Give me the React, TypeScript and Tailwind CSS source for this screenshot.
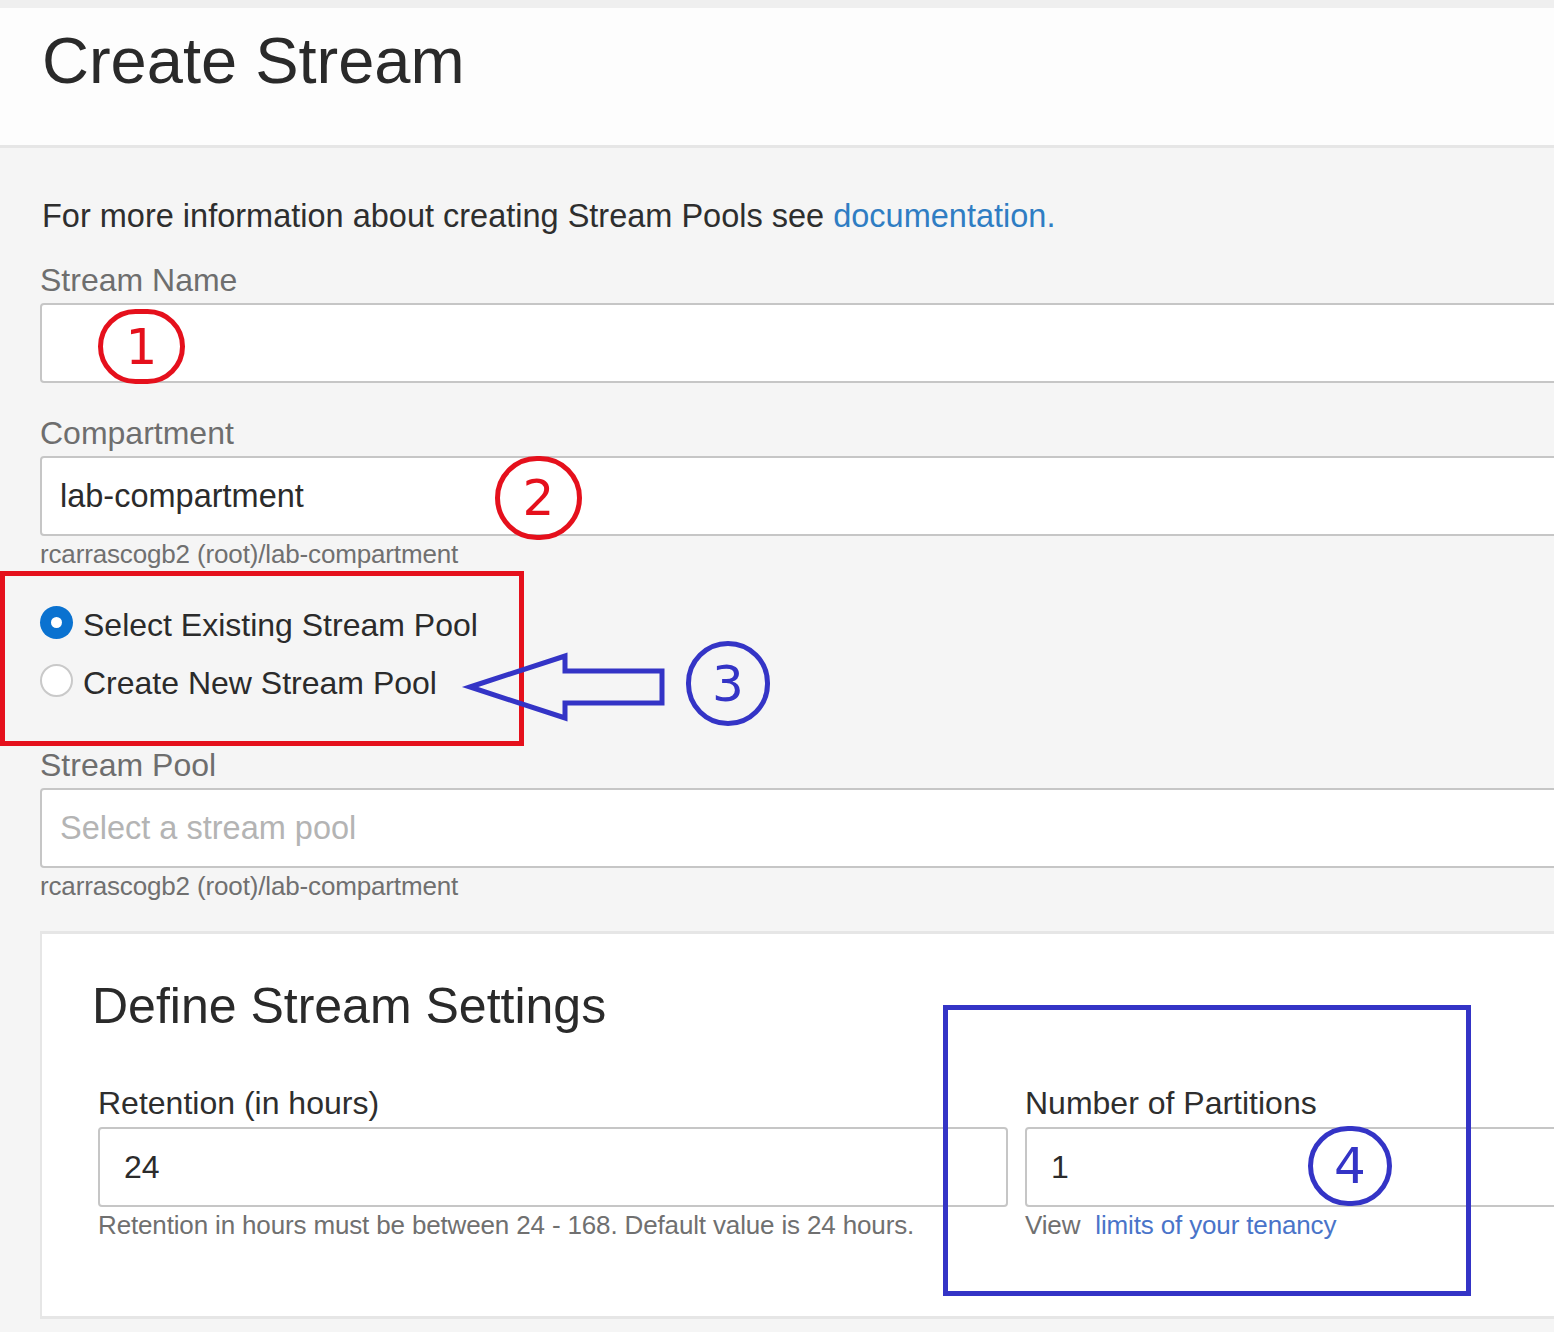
import React from 'react';

const font = { fontFamily: '"Liberation Sans", Arial, sans-serif' };

function Field({ label, value, placeholder, help }: { label: string; value?: string; placeholder?: string; help?: string }) {
  return (
    <div>
      <div className="text-[32px] leading-[36px] text-[#6e6e6e]">{label}</div>
      <div className="mt-[5px] -mr-6 h-[80px] rounded-[4px] border-2 border-[#c6c6c6] bg-white pl-[18px] flex items-center text-[32.5px]">
        {value ? <span className="text-[#2b2b2b]">{value}</span> : <span className="text-[#b4b4b4]">{placeholder}</span>}
      </div>
      {help && <div className="mt-[3px] text-[26px] leading-[30px] tracking-[-0.15px] text-[#707070]">{help}</div>}
    </div>
  );
}

function Mark({ n, color, className }: { n: string; color: string; className: string }) {
  return (
    <div
      className={`absolute flex items-center justify-center rounded-full border-[5px] ${className}`}
      style={{ borderColor: color, color }}
    >
      <span className="text-[50px] leading-none" style={{ fontFamily: '"DejaVu Sans", sans-serif' }}>
        {n}
      </span>
    </div>
  );
}

export default function App() {
  return (
    <div className="relative min-h-[1332px] w-full overflow-hidden bg-[#f5f5f5]" style={font}>
      <div className="h-[8px] bg-[#efefef]" />
      <header className="h-[140px] bg-[#fdfdfd] border-b-[3px] border-[#e6e6e6] pl-[42px] pt-[13px]">
        <h1 className="text-[65px] leading-[80px] text-[#2a2a2a]">Create Stream</h1>
      </header>

      <main className="pl-[40px]">
        <p className="mt-[50px] pl-[2px] text-[32.5px] leading-[36px] text-[#2e2e2e]">
          For more information about creating Stream Pools see <span className="text-[#2f7dc3]">documentation.</span>
        </p>

        <div className="mt-[28px]">
          <Field label="Stream Name" />
        </div>
        <div className="mt-[32px]">
          <Field label="Compartment" value="lab-compartment" help="rcarrascogb2 (root)/lab-compartment" />
        </div>

        <div className="mt-[38px] flex flex-col gap-[22px]">
          <label className="flex items-center gap-[10px] text-[32px] leading-[36px] text-[#2b2b2b]">
            <span className="flex h-[33px] w-[33px] -translate-y-[3px] items-center justify-center rounded-full bg-[#0a72d0]">
              <span className="h-[11px] w-[11px] rounded-full bg-white" />
            </span>
            Select Existing Stream Pool
          </label>
          <label className="flex items-center gap-[10px] text-[32px] leading-[36px] text-[#2b2b2b]">
            <span className="h-[33px] w-[33px] -translate-y-[3px] rounded-full border-2 border-[#c9c9c9] bg-white" />
            Create New Stream Pool
          </label>
        </div>

        <div className="mt-[46px]">
          <Field label="Stream Pool" placeholder="Select a stream pool" help="rcarrascogb2 (root)/lab-compartment" />
        </div>

        <section className="mt-[30px] -mr-6 h-[388px] border-l-2 border-t-[3px] border-b-[3px] border-[#e6e6e6] bg-white pl-[50px] pt-[44px]">
          <h2 className="text-[50px] leading-[56px] text-[#2a2a2a]">Define Stream Settings</h2>
          <div className="mt-[51px] pl-[6px] flex gap-[17px]">
            <div className="w-[910px] shrink-0">
              <div className="text-[32px] leading-[36px] text-[#2e2e2e]">Retention (in hours)</div>
              <div className="mt-[6px] h-[80px] rounded-[4px] border-2 border-[#c6c6c6] bg-white pl-[24px] flex items-center text-[32px] text-[#2b2b2b]">
                24
              </div>
              <div className="mt-[3px] text-[26px] leading-[30px] tracking-[-0.15px] text-[#707070]">
                Retention in hours must be between 24 - 168. Default value is 24 hours.
              </div>
            </div>
            <div className="flex-1">
              <div className="text-[32px] leading-[36px] text-[#2e2e2e]">Number of Partitions</div>
              <div className="mt-[6px] h-[80px] rounded-[4px] border-2 border-[#c6c6c6] bg-white pl-[24px] flex items-center text-[32px] text-[#2b2b2b]">
                1
              </div>
              <div className="mt-[3px] text-[26px] leading-[30px] tracking-[-0.15px] text-[#707070]">
                View <span className="ml-[8px] text-[#4a74c9]">limits of your tenancy</span>
              </div>
            </div>
          </div>
        </section>
      </main>

      {/* annotations */}
      <Mark n="1" color="#e5101c" className="left-[98px] top-[309px] h-[75px] w-[87px]" />
      <Mark n="2" color="#e5101c" className="left-[495px] top-[456px] h-[84px] w-[87px]" />
      <Mark n="3" color="#3434c6" className="left-[686px] top-[641px] h-[85px] w-[84px]" />
      <Mark n="4" color="#3434c6" className="left-[1308px] top-[1126px] h-[80px] w-[84px]" />

      <div className="absolute left-0 top-[571px] h-[175px] w-[524px] border-[5px] border-[#e5101c]" />
      <div className="absolute left-[943px] top-[1005px] h-[291px] w-[528px] border-[5px] border-[#3434c6]" />

      <svg className="absolute left-[460px] top-[648px]" width="212" height="78" viewBox="460 648 212 78">
        <polygon
          points="470,687 565,656 565,671 662,671 662,703 565,703 565,718"
          fill="none"
          stroke="#3434c6"
          strokeWidth="5"
          strokeLinejoin="miter"
        />
      </svg>
    </div>
  );
}
